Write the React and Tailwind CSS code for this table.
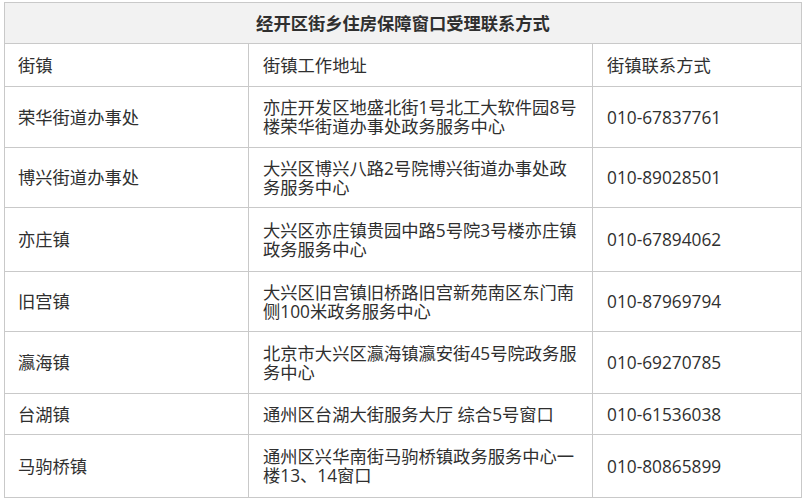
export default function App() {
  const rows = [
    { h: "h-[61px]", name: "荣华街道办事处", addr: ["亦庄开发区地盛北街1号北工大软件园8号", "楼荣华街道办事处政务服务中心"], tel: "010-67837761" },
    { h: "h-[60px]", name: "博兴街道办事处", addr: ["大兴区博兴八路2号院博兴街道办事处政", "务服务中心"], tel: "010-89028501" },
    { h: "h-[64px]", name: "亦庄镇", addr: ["大兴区亦庄镇贵园中路5号院3号楼亦庄镇", "政务服务中心"], tel: "010-67894062" },
    { h: "h-[60px]", name: "旧宫镇", addr: ["大兴区旧宫镇旧桥路旧宫新苑南区东门南", "侧100米政务服务中心"], tel: "010-87969794" },
    { h: "h-[62px]", name: "瀛海镇", addr: ["北京市大兴区瀛海镇瀛安街45号院政务服", "务中心"], tel: "010-69270785" },
    { h: "h-[41px]", name: "台湖镇", addr: ["通州区台湖大街服务大厅 综合5号窗口"], tel: "010-61536038" },
    { h: "h-[62px]", name: "马驹桥镇", addr: ["通州区兴华南街马驹桥镇政务服务中心一", "楼13、14窗口"], tel: "010-80865899", last: true },
  ];
  const cell = "flex items-center px-[13px] box-border";
  return (
    <div
      className="w-[807px] h-[503px] bg-white pt-[2px] pl-[4px] text-[#2f2f2f] text-[17.3px] leading-[19px]"
      style={{ fontFamily: '"Open Sans", "Noto Sans CJK SC", sans-serif' }}
    >
      <div className="w-[798px] border border-[#c9c9c9] box-border">
        <div className="h-[41px] border-b border-[#c9c9c9] bg-[#f2f2f2] flex items-center justify-center font-bold box-border">
          经开区街乡住房保障窗口受理联系方式
        </div>
        <div className="h-[43px] flex border-b border-[#c9c9c9] box-border">
          <div className={`${cell} w-[244px] border-r border-[#c9c9c9]`}>街镇</div>
          <div className={`${cell} w-[344px] border-r border-[#c9c9c9] pl-[14px]`}>街镇工作地址</div>
          <div className={`${cell} flex-1 pl-[14px]`}>街镇联系方式</div>
        </div>
        {rows.map((r) => (
          <div key={r.name} className={`${r.h} flex box-border ${r.last ? "" : "border-b border-[#c9c9c9]"}`}>
            <div className={`${cell} w-[244px] border-r border-[#c9c9c9]`}>{r.name}</div>
            <div className={`${cell} w-[344px] border-r border-[#c9c9c9] pl-[14px]`}>
              <div>
                {r.addr.map((l, i) => (
                  <div key={i} className="whitespace-nowrap">{l}</div>
                ))}
              </div>
            </div>
            <div className={`${cell} flex-1 pl-[14px]`}>{r.tel}</div>
          </div>
        ))}
      </div>
    </div>
  );
}
